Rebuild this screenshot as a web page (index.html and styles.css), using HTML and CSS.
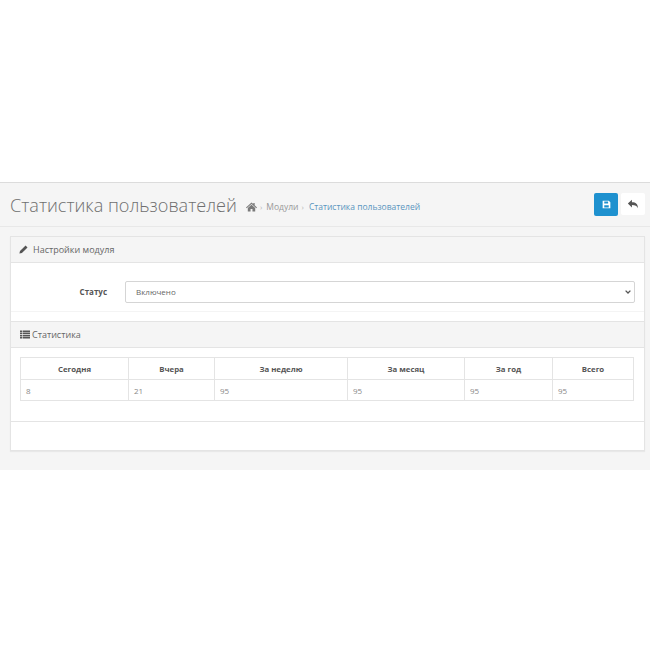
FILE: index.html
```html
<!DOCTYPE html>
<html lang="ru">
<head>
    <meta charset="UTF-8">
    <meta name="viewport" content="width=device-width, initial-scale=1.0">
    <title>Статистика пользователей</title>
    <link rel="stylesheet" href="styles.css">
</head>
<body>

    <div class="content">
        <!-- заголовок страницы -->
        <div class="page-header">
            <h1>Статистика пользователей</h1>
            <ul class="breadcrumb">
                <li class="crumb-home">
                    <svg viewBox="0 0 16 14" width="11" height="10"><path d="M8 0.5 L10.6 2.8 V1.2 H12.6 V4.6 L16 7.6 L15 8.7 L8 2.6 L1 8.7 L0 7.6 Z M2.6 8.6 L8 3.9 L13.4 8.6 V13.6 H9.4 V9.8 H6.6 V13.6 H2.6 Z" fill="#7a7a7a"/></svg>
                </li>
                <li class="sep">›</li>
                <li>Модули</li>
                <li class="sep">›</li>
                <li class="active">Статистика пользователей</li>
            </ul>
            <div class="buttons">
                <button class="btn btn-primary">
                    <svg viewBox="0 0 14 14" width="9" height="9"><path d="M1 1 H10.5 L13 3.5 V13 H1 Z M3.5 2.5 V5.5 H9.5 V2.5 Z M3.5 8 V11.5 H10.5 V8 Z" fill="#fff" fill-rule="evenodd"/></svg>
                </button>
                <button class="btn btn-default">
                    <svg viewBox="0 0 16 14" width="12" height="10"><path d="M6.5 1 V4.4 C12 4.4 15 7 15 13 C13.6 9.6 11 8.4 6.5 8.4 V11.8 L0.8 6.4 Z" fill="#555"/></svg>
                </button>
            </div>
        </div>

        <div class="panel">
            <div class="panel-heading">
                <svg viewBox="0 0 14 14" width="9" height="9"><path d="M10.2 0.8 L13.2 3.8 L4.6 12.4 L0.6 13.4 L1.6 9.4 Z" fill="#555"/></svg>
                Настройки модуля
            </div>
            <div class="form-group">
                <label class="form-label" for="status">Статус</label>
                <select id="status" class="form-control">
                    <option>Включено</option>
                    <option>Отключено</option>
                </select>
            </div>

            <!-- вложенная панель со статистикой -->
            <div class="panel panel-inner">
                <div class="panel-heading">
                    <svg viewBox="0 0 14 12" width="10" height="9"><path d="M0 0.5 H2.8 V2.8 H0 Z M3.6 0.5 H14 V2.8 H3.6 Z M0 3.5 H2.8 V5.4 H0 Z M3.6 3.5 H14 V5.4 H3.6 Z M0 6.2 H2.8 V8.4 H0 Z M3.6 6.2 H14 V8.4 H3.6 Z M0 9.2 H2.8 V11.5 H0 Z M3.6 9.2 H14 V11.5 H3.6 Z" fill="#555"/></svg>
                    Статистика
                </div>
                <div class="panel-body">
                    <table class="stats">
                        <thead>
                            <tr>
                                <th class="col-today">Сегодня</th>
                                <th class="col-yesterday">Вчера</th>
                                <th class="col-week">За неделю</th>
                                <th class="col-month">За месяц</th>
                                <th class="col-year">За год</th>
                                <th>Всего</th>
                            </tr>
                        </thead>
                        <tbody>
                            <tr>
                                <td>8</td>
                                <td>21</td>
                                <td>95</td>
                                <td>95</td>
                                <td>95</td>
                                <td>95</td>
                            </tr>
                        </tbody>
                    </table>
                </div>
            </div>
        </div>
    </div>

</body>
</html>
```

FILE: styles.css
```css
* {
    box-sizing: border-box;
}
body {
    margin: 0;
    padding-top: 182px;
    background: #fff;
    font-family: "Open Sans", sans-serif;
    font-size: 8.5px;
    color: #666;
}
.content {
    height: 288px;
    background: #f5f5f5;
    border-top: 1px solid #dcdcdc;
}
.page-header {
    display: flex;
    align-items: center;
    height: 44px;
    padding: 0 5px 0 10px;
    border-bottom: 1px solid #e8e8e8;
}
h1 {
    margin: 0 9px 0 0;
    font-size: 18.1px;
    font-weight: 300;
    color: #6f6f6f;
    white-space: nowrap;
}
.breadcrumb {
    display: flex;
    align-items: center;
    gap: 3px;
    margin: 4px 0 0;
    padding: 0;
    list-style: none;
    color: #999;
}
.breadcrumb .active {
    margin-left: 2px;
    color: #5a96c0;
}
.crumb-home {
    display: flex;
}
.sep {
    font-size: 8px;
    color: #b5b5b5;
}
.sep + li {
    margin-left: 1px;
}
.buttons {
    display: flex;
    gap: 3px;
    margin-left: auto;
}
.btn {
    display: flex;
    align-items: center;
    justify-content: center;
    width: 24px;
    height: 22px;
    padding: 0;
    border: none;
    border-radius: 2px;
}
.btn-primary {
    background: #1e91cf;
    height: 23px;
}
.btn-default {
    background: #fff;
}
.panel {
    height: 215px;
    margin: 9px 5px 0 10px;
    background: #fff;
    border: 1px solid #e4e4e4;
    box-shadow: 0 1px 1px rgba(0, 0, 0, 0.05);
}
.panel-heading {
    display: flex;
    align-items: center;
    gap: 5px;
    height: 26px;
    padding-left: 8px;
    background: #f5f5f5;
    border-bottom: 1px solid #e4e4e4;
    font-size: 9px;
    color: #666;
}
.form-group {
    display: flex;
    align-items: center;
    height: 49px;
    padding: 9px 9px 0 0;
    border-bottom: 1px solid #f4f4f4;
}
.form-label {
    width: 96px;
    margin-right: 18px;
    text-align: right;
    font-size: 8px;
    font-weight: 700;
    color: #555;
}
.form-control {
    flex: 1;
    height: 22px;
    padding: 0 10px;
    appearance: none;
    background: #fff url("data:image/svg+xml,%3Csvg xmlns='http://www.w3.org/2000/svg' width='6' height='4'%3E%3Cpath d='M0.6 0.6 L3 3 L5.4 0.6' fill='none' stroke='%23555' stroke-width='1.3'/%3E%3C/svg%3E") no-repeat right 3px center;
    border: 1px solid #d5d5d5;
    border-radius: 2px;
    font-family: inherit;
    font-size: 8px;
    color: #666;
}
.panel-inner {
    height: 101px;
    margin: 9px 0 0;
    border-width: 1px 0 1px 0;
    box-shadow: none;
}
.panel-inner .panel-heading {
    padding-left: 9px;
    gap: 2px;
}
.panel-body {
    padding: 9px 10px 9px 9px;
}
.stats {
    width: 100%;
    border-collapse: collapse;
    table-layout: fixed;
}
.stats th,
.stats td {
    border: 1px solid #e4e4e4;
}
.stats th {
    height: 22px;
    font-size: 7.8px;
    font-weight: 700;
    color: #555;
    text-align: center;
}
.stats td {
    height: 21px;
    padding: 0 5px;
    font-size: 8px;
    color: #888;
}
.col-today { width: 108px; }
.col-yesterday { width: 86px; }
.col-week { width: 133px; }
.col-month { width: 117px; }
.col-year { width: 88px; }
```
